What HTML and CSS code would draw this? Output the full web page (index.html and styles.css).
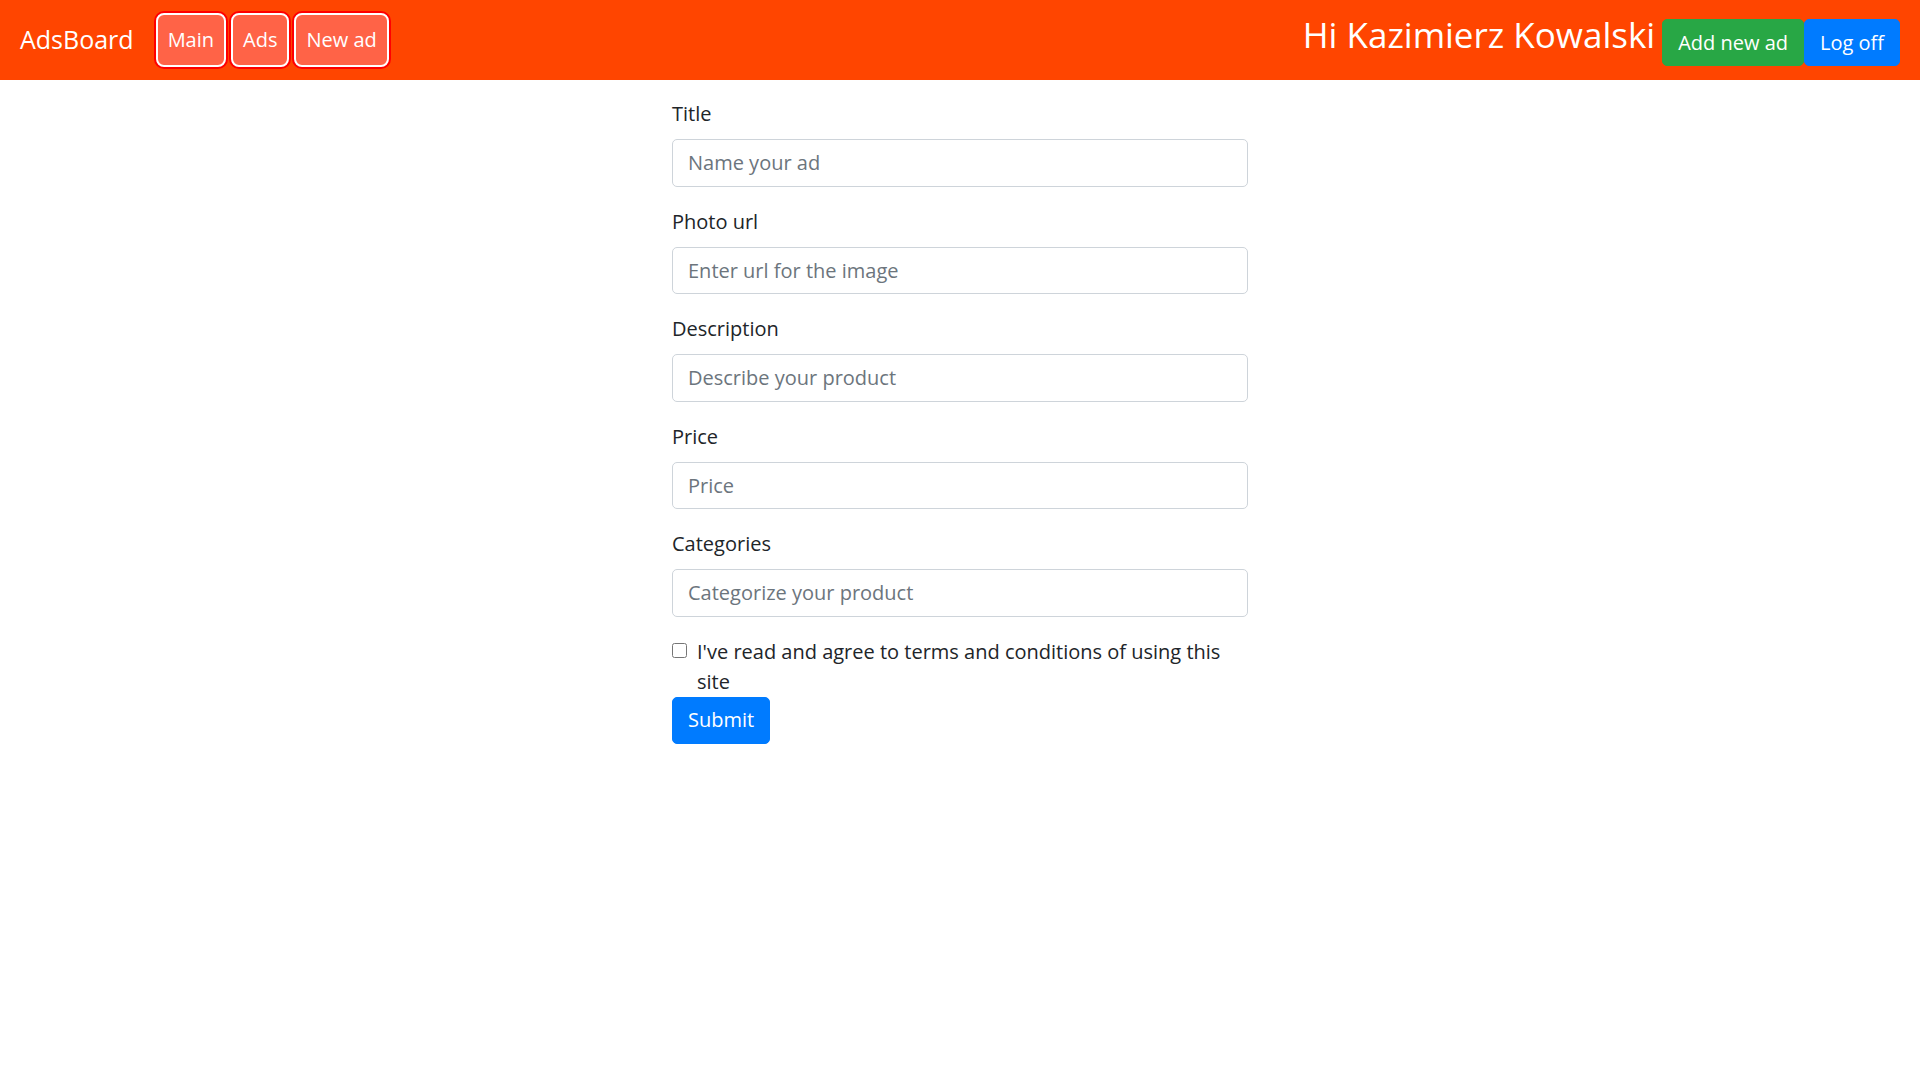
FILE: index.html
```html
<!DOCTYPE html>
<html lang="en">
<head>
<meta charset="utf-8">
<title>AdsBoard</title>
<link rel="stylesheet" href="styles.css">
</head>
<body>
<nav class="navbar">
  <div class="nav-left">
    <a class="brand" href="#">AdsBoard</a>
    <div class="nav-links">
      <a class="nav-btn" href="#">Main</a>
      <a class="nav-btn" href="#">Ads</a>
      <a class="nav-btn" href="#">New ad</a>
    </div>
  </div>
  <div class="nav-right">
    <h3 class="greeting">Hi Kazimierz Kowalski</h3>
    <div class="nav-actions">
      <a class="btn btn-success" href="#">Add new ad</a>
      <a class="btn btn-primary" href="#">Log off</a>
    </div>
  </div>
</nav>

<main class="content">
  <form class="ad-form">
    <div class="form-group">
      <label class="form-label" for="title">Title</label>
      <input class="form-control" id="title" type="text" placeholder="Name your ad">
    </div>
    <div class="form-group">
      <label class="form-label" for="photo">Photo url</label>
      <input class="form-control" id="photo" type="text" placeholder="Enter url for the image">
    </div>
    <div class="form-group">
      <label class="form-label" for="desc">Description</label>
      <input class="form-control" id="desc" type="text" placeholder="Describe your product">
    </div>
    <div class="form-group">
      <label class="form-label" for="price">Price</label>
      <input class="form-control" id="price" type="text" placeholder="Price">
    </div>
    <div class="form-group">
      <label class="form-label" for="cats">Categories</label>
      <input class="form-control" id="cats" type="text" placeholder="Categorize your product">
    </div>
    <div class="form-check">
      <input class="check-input" id="agree" type="checkbox">
      <label class="check-label" for="agree">I've read and agree to terms and conditions of using this site</label>
    </div>
    <button class="btn btn-primary" type="button">Submit</button>
  </form>
</main>
</body>
</html>
```
FILE: styles.css
```css
* { box-sizing: border-box; }

html, body {
  margin: 0;
  padding: 0;
}

body {
  font-family: "Open Sans", "Liberation Sans", sans-serif;
  font-size: 20px;
  line-height: 1.5;
  color: #212529;
  background: #fff;
}

a { text-decoration: none; }

.navbar {
  height: 80px;
  background: #ff4500;
  padding: 0 20px;
  display: flex;
  align-items: center;
  justify-content: space-between;
}

.nav-left {
  display: flex;
  align-items: center;
}

.brand {
  color: #fff;
  font-size: 25px;
  line-height: 1.5;
  margin-right: 22px;
}

.nav-links {
  display: flex;
  align-items: center;
  gap: 5px;
}

.nav-btn {
  display: block;
  color: #fff;
  background: #ff6347;
  border: 2px solid #fff;
  border-radius: 8px;
  box-shadow: 0 0 0 2px #f00;
  padding: 10px 10px;
  line-height: 30px;
  font-size: 20px;
}

.nav-right {
  display: flex;
  align-items: center;
}

.greeting {
  margin: 0 7px 10px 0;
  font-size: 35px;
  font-weight: 400;
  line-height: 1.2;
  color: #fff;
}

.nav-actions {
  display: flex;
  margin-top: 5px;
}

.btn {
  display: inline-block;
  font-family: inherit;
  font-size: 20px;
  line-height: 30px;
  padding: 7.5px 15px;
  border: 1px solid transparent;
  border-radius: 5px;
  color: #fff;
  cursor: pointer;
}

.btn-success {
  background: #28a745;
  border-color: #28a745;
}

.btn-primary {
  background: #007bff;
  border-color: #007bff;
}

.content {
  padding-top: 19px;
}

.ad-form {
  width: 30%;
  margin: 0 auto;
}

.form-group {
  margin-bottom: 20px;
}

.form-label {
  display: inline-block;
  margin-bottom: 10px;
  line-height: 30px;
}

.form-control {
  display: block;
  width: 100%;
  height: 47.5px;
  padding: 7.5px 15px;
  font-family: inherit;
  font-size: 20px;
  line-height: 30px;
  color: #495057;
  background: #fff;
  border: 1px solid #ced4da;
  border-radius: 5px;
}

.form-control::placeholder {
  color: #6c757d;
  opacity: 1;
}

.form-check {
  position: relative;
  padding-left: 25px;
}

.check-input {
  position: absolute;
  left: 0;
  top: 6px;
  margin: 0;
  width: 15px;
  height: 15px;
}

.check-label {
  line-height: 30px;
}
```
